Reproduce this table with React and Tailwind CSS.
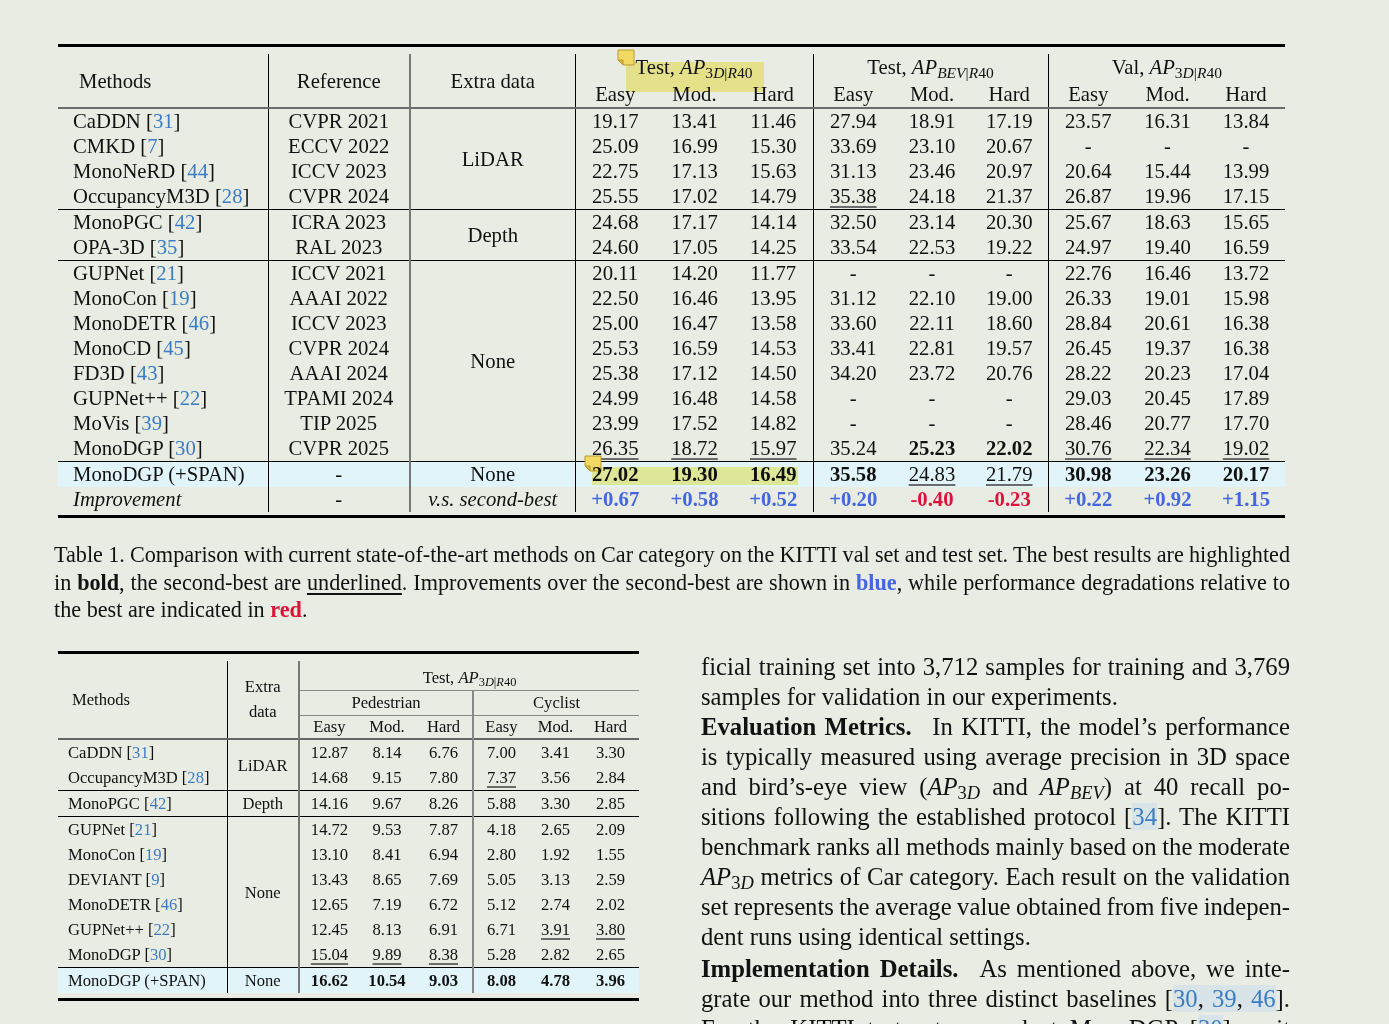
import React from 'react';

const Cite = ({ n }) => <span className="text-[#3b7cc4]">{n}</span>;

const AP3D = () => (
  <span className="whitespace-nowrap">
    <i>AP</i>
    <sub>
      3<i>D</i>|<i>R</i>40
    </sub>
  </span>
);

const APBEV = () => (
  <span className="whitespace-nowrap">
    <i>AP</i>
    <sub>
      <i>BEV</i>|<i>R</i>40
    </sub>
  </span>
);

const Sticky = ({ className }) => (
  <svg className={className} width="18" height="17" viewBox="0 0 18 17">
    <path d="M1 1 H17 V16 H6 L1 11 Z" fill="#f2d964" stroke="#b99a2c" strokeWidth="1" />
    <path d="M1 11 H6 V16 Z" fill="#d8b93e" stroke="#b99a2c" strokeWidth="1" />
  </svg>
);

const topGroups = [
  {
    g: 'LiDAR',
    rows: [
      ['CaDDN', '31', 'CVPR 2021', ['19.17', '13.41', '11.46', '27.94', '18.91', '17.19', '23.57', '16.31', '13.84']],
      ['CMKD', '7', 'ECCV 2022', ['25.09', '16.99', '15.30', '33.69', '23.10', '20.67', '-', '-', '-']],
      ['MonoNeRD', '44', 'ICCV 2023', ['22.75', '17.13', '15.63', '31.13', '23.46', '20.97', '20.64', '15.44', '13.99']],
      ['OccupancyM3D', '28', 'CVPR 2024', ['25.55', '17.02', '14.79', '_35.38', '24.18', '21.37', '26.87', '19.96', '17.15']],
    ],
  },
  {
    g: 'Depth',
    rows: [
      ['MonoPGC', '42', 'ICRA 2023', ['24.68', '17.17', '14.14', '32.50', '23.14', '20.30', '25.67', '18.63', '15.65']],
      ['OPA-3D', '35', 'RAL 2023', ['24.60', '17.05', '14.25', '33.54', '22.53', '19.22', '24.97', '19.40', '16.59']],
    ],
  },
  {
    g: 'None',
    rows: [
      ['GUPNet', '21', 'ICCV 2021', ['20.11', '14.20', '11.77', '-', '-', '-', '22.76', '16.46', '13.72']],
      ['MonoCon', '19', 'AAAI 2022', ['22.50', '16.46', '13.95', '31.12', '22.10', '19.00', '26.33', '19.01', '15.98']],
      ['MonoDETR', '46', 'ICCV 2023', ['25.00', '16.47', '13.58', '33.60', '22.11', '18.60', '28.84', '20.61', '16.38']],
      ['MonoCD', '45', 'CVPR 2024', ['25.53', '16.59', '14.53', '33.41', '22.81', '19.57', '26.45', '19.37', '16.38']],
      ['FD3D', '43', 'AAAI 2024', ['25.38', '17.12', '14.50', '34.20', '23.72', '20.76', '28.22', '20.23', '17.04']],
      ['GUPNet++', '22', 'TPAMI 2024', ['24.99', '16.48', '14.58', '-', '-', '-', '29.03', '20.45', '17.89']],
      ['MoVis', '39', 'TIP 2025', ['23.99', '17.52', '14.82', '-', '-', '-', '28.46', '20.77', '17.70']],
      ['MonoDGP', '30', 'CVPR 2025', ['_26.35', '_18.72', '_15.97', '35.24', '*25.23', '*22.02', '_30.76', '_22.34', '_19.02']],
    ],
  },
];

const spanTop = ['*27.02', '*19.30', '*16.49', '*35.58', '_24.83', '_21.79', '*30.98', '*23.26', '*20.17'];
const improve = ['+0.67', '+0.58', '+0.52', '+0.20', '-0.40', '-0.23', '+0.22', '+0.92', '+1.15'];

const botGroups = [
  {
    g: 'LiDAR',
    rows: [
      ['CaDDN', '31', ['12.87', '8.14', '6.76', '7.00', '3.41', '3.30']],
      ['OccupancyM3D', '28', ['14.68', '9.15', '7.80', '_7.37', '3.56', '2.84']],
    ],
  },
  {
    g: 'Depth',
    rows: [['MonoPGC', '42', ['14.16', '9.67', '8.26', '5.88', '3.30', '2.85']]],
  },
  {
    g: 'None',
    rows: [
      ['GUPNet', '21', ['14.72', '9.53', '7.87', '4.18', '2.65', '2.09']],
      ['MonoCon', '19', ['13.10', '8.41', '6.94', '2.80', '1.92', '1.55']],
      ['DEVIANT', '9', ['13.43', '8.65', '7.69', '5.05', '3.13', '2.59']],
      ['MonoDETR', '46', ['12.65', '7.19', '6.72', '5.12', '2.74', '2.02']],
      ['GUPNet++', '22', ['12.45', '8.13', '6.91', '6.71', '_3.91', '_3.80']],
      ['MonoDGP', '30', ['_15.04', '_9.89', '_8.38', '5.28', '2.82', '2.65']],
    ],
  },
];

const spanBot = ['*16.62', '*10.54', '*9.03', '*8.08', '*4.78', '*3.96'];

function Val({ v }) {
  let t = v;
  let cls = '';
  if (t.startsWith('*')) {
    cls = 'font-bold';
    t = t.slice(1);
  } else if (t.startsWith('_')) {
    cls = 'underline decoration-2 decoration-[#6b6b6b] underline-offset-[3px]';
    t = t.slice(1);
  }
  return <span className={cls}>{t}</span>;
}

function TopTable() {
  const edge = (i) => (i === 2 || i === 5 ? 'border-r border-r-black' : '');
  return (
    <div className="ml-[4px] w-[1227px]">
      <div className="h-[3px] bg-black" />
      <table className="mt-[7px] w-[1227px] table-fixed border-collapse text-[20.7px] leading-[25px]">
        <colgroup>
          <col className="w-[210px]" />
          <col className="w-[142px]" />
          <col className="w-[165px]" />
          <col className="w-[80px]" />
          <col className="w-[79px]" />
          <col className="w-[79px]" />
          <col className="w-[80px]" />
          <col className="w-[78px]" />
          <col className="w-[77px]" />
          <col className="w-[80px]" />
          <col className="w-[79px]" />
          <col className="w-[78px]" />
        </colgroup>
        <thead className="border-b-2 border-b-[#6b6b6b]">
          <tr className="h-[27px]">
            <th rowSpan={2} className="border-r border-r-black p-0 pl-[21px] pt-[2px] text-left font-normal">
              Methods
            </th>
            <th rowSpan={2} className="border-r-2 border-r-[#777] p-0 pt-[2px] font-normal">
              Reference
            </th>
            <th rowSpan={2} className="border-r border-r-black p-0 pt-[2px] font-normal">
              Extra data
            </th>
            <th colSpan={3} className="relative border-r border-r-black p-0 font-normal">
              <div className="absolute left-[50px] top-[8px] h-[30px] w-[138px] bg-[#fcf29b] mix-blend-multiply" />
              <Sticky className="absolute left-[41px] top-[-5px]" />
              <span className="relative">
                Test, <AP3D />
              </span>
            </th>
            <th colSpan={3} className="border-r border-r-black p-0 font-normal">
              Test, <APBEV />
            </th>
            <th colSpan={3} className="p-0 font-normal">
              Val, <AP3D />
            </th>
          </tr>
          <tr className="h-[27px]">
            {['Easy', 'Mod.', 'Hard', 'Easy', 'Mod.', 'Hard', 'Easy', 'Mod.', 'Hard'].map((h, i) => (
              <th key={i} className={`p-0 font-normal ${edge(i)}`}>
                {h}
              </th>
            ))}
          </tr>
        </thead>
        {topGroups.map((grp, gi) => (
          <tbody key={gi} className={gi > 0 ? 'border-t border-t-black' : ''}>
            {grp.rows.map((r, ri) => (
              <tr key={ri} className="h-[25px]">
                <td className="border-r border-r-black p-0 pl-[15px] text-left">
                  {r[0]} [<Cite n={r[1]} />]
                </td>
                <td className="border-r-2 border-r-[#777] p-0 text-center">{r[2]}</td>
                {ri === 0 && (
                  <td rowSpan={grp.rows.length} className="border-r border-r-black p-0 text-center align-middle">
                    {grp.g}
                  </td>
                )}
                {r[3].map((v, vi) => (
                  <td key={vi} className={`p-0 text-center ${edge(vi)}`}>
                    <Val v={v} />
                  </td>
                ))}
              </tr>
            ))}
          </tbody>
        ))}
        <tbody className="border-t border-t-black">
          <tr className="h-[25px] bg-[#e0f4fa]">
            <td className="border-r border-r-black p-0 pl-[15px] text-left">MonoDGP (+SPAN)</td>
            <td className="border-r-2 border-r-[#777] p-0 text-center">-</td>
            <td className="border-r border-r-black p-0 text-center">None</td>
            {spanTop.map((v, vi) => (
              <td key={vi} className={`p-0 text-center ${edge(vi)} ${vi === 0 ? 'relative' : ''}`}>
                {vi === 0 && (
                  <>
                    <div className="absolute left-[16px] top-[5px] h-[18px] w-[206px] bg-[#fcf29b] mix-blend-multiply" />
                    <Sticky className="absolute left-[8px] top-[-7px]" />
                  </>
                )}
                <span className="relative">
                  <Val v={v} />
                </span>
              </td>
            ))}
          </tr>
          <tr className="h-[25px]">
            <td className="border-r border-r-black p-0 pl-[15px] text-left italic">Improvement</td>
            <td className="border-r-2 border-r-[#777] p-0 text-center">-</td>
            <td className="border-r border-r-black p-0 text-center italic">v.s. second-best</td>
            {improve.map((v, vi) => (
              <td
                key={vi}
                className={`p-0 text-center font-bold ${edge(vi)} ${v.startsWith('-') ? 'text-[#e0123c]' : 'text-[#4466e0]'}`}
              >
                {v}
              </td>
            ))}
          </tr>
        </tbody>
      </table>
      <div className="mt-[3px] h-[3px] bg-black" />
    </div>
  );
}

function BottomTable() {
  const gray = 'border-r-2 border-r-[#777]';
  const sep = (i) => (i === 2 ? 'border-r-2 border-r-[#888]' : '');
  return (
    <div className="ml-[4px] w-[581px]">
      <div className="h-[3px] bg-black" />
      <table className="mt-[7px] w-[581px] table-fixed border-collapse text-[16.6px] leading-[25px]">
        <colgroup>
          <col className="w-[169px]" />
          <col className="w-[72px]" />
          <col className="w-[60px]" />
          <col className="w-[56px]" />
          <col className="w-[58px]" />
          <col className="w-[56px]" />
          <col className="w-[53px]" />
          <col className="w-[57px]" />
        </colgroup>
        <thead className="border-b-2 border-b-[#666]">
          <tr className="h-[29px]">
            <th rowSpan={3} className="border-r border-r-black p-0 pl-[14px] text-left font-normal">
              Methods
            </th>
            <th rowSpan={3} className={`${gray} p-0 font-normal`}>
              Extra
              <br />
              data
            </th>
            <th colSpan={6} className="p-0 pt-[4px] font-normal">
              Test, <AP3D />
            </th>
          </tr>
          <tr className="h-[25px] leading-[22px]">
            <th colSpan={3} className="border-r-2 border-t border-r-[#888] border-t-[#888] p-0 font-normal">
              Pedestrian
            </th>
            <th colSpan={3} className="border-t border-t-[#888] p-0 font-normal">
              Cyclist
            </th>
          </tr>
          <tr className="h-[24px] border-t border-t-[#888] leading-[22px]">
            {['Easy', 'Mod.', 'Hard', 'Easy', 'Mod.', 'Hard'].map((h, i) => (
              <th key={i} className={`p-0 font-normal ${sep(i)}`}>
                {h}
              </th>
            ))}
          </tr>
        </thead>
        {botGroups.map((grp, gi) => (
          <tbody key={gi} className={gi > 0 ? 'border-t border-t-black' : ''}>
            {grp.rows.map((r, ri) => (
              <tr key={ri} className="h-[25px]">
                <td className="border-r border-r-black p-0 pl-[10px] text-left">
                  {r[0]} [<Cite n={r[1]} />]
                </td>
                {ri === 0 && (
                  <td rowSpan={grp.rows.length} className={`${gray} p-0 text-center align-middle`}>
                    {grp.g}
                  </td>
                )}
                {r[2].map((v, vi) => (
                  <td key={vi} className={`p-0 text-center ${sep(vi)}`}>
                    <Val v={v} />
                  </td>
                ))}
              </tr>
            ))}
          </tbody>
        ))}
        <tbody className="border-t border-t-black">
          <tr className="h-[25px] bg-[#e0f4fa]">
            <td className="border-r border-r-black p-0 pl-[10px] text-left">MonoDGP (+SPAN)</td>
            <td className={`${gray} p-0 text-center`}>None</td>
            {spanBot.map((v, vi) => (
              <td key={vi} className={`p-0 text-center ${sep(vi)}`}>
                <Val v={v} />
              </td>
            ))}
          </tr>
        </tbody>
      </table>
      <div className="mt-[5px] h-[3px] bg-black" />
    </div>
  );
}

// justified line: spaces squeezed first so the line never wraps, then stretched to the full width
const J = 'whitespace-nowrap text-justify [text-align-last:justify] [word-spacing:-4px]';

const BodyCite = ({ children }) => <span className="bg-[#d9e4e9]">{children}</span>;

function Body() {
  return (
    <div className="ml-[62px] mt-[1px] w-[589px] text-[24.7px] leading-[30px]">
      <div className={J}>ficial training set into 3,712 samples for training and 3,769</div>
      <div>samples for validation in our experiments.</div>
      <div className={J}>
        <b>Evaluation Metrics.</b>&ensp; In KITTI, the model’s performance
      </div>
      <div className={J}>is typically measured using average precision in 3D space</div>
      <div className={J}>
        and bird’s-eye view (
        <i>AP</i>
        <sub>
          3<i>D</i>
        </sub>{' '}
        and <i>AP</i>
        <sub>
          <i>BEV</i>
        </sub>
        ) at 40 recall po-
      </div>
      <div className={J}>
        sitions following the established protocol [
        <BodyCite>
          <Cite n="34" />
        </BodyCite>
        ]. The KITTI
      </div>
      <div className={J}>benchmark ranks all methods mainly based on the moderate</div>
      <div className={J}>
        <i>AP</i>
        <sub>
          3<i>D</i>
        </sub>{' '}
        metrics of Car category. Each result on the validation
      </div>
      <div className={J}>set represents the average value obtained from five indepen-</div>
      <div>dent runs using identical settings.</div>
      <div className={`${J} mt-[2px]`}>
        <b>Implementation Details.</b>&ensp; As mentioned above, we inte-
      </div>
      <div className={J}>
        grate our method into three distinct baselines [
        <BodyCite>
          <Cite n="30" />, <Cite n="39" />, <Cite n="46" />
        </BodyCite>
        ].
      </div>
      <div className={J}>
        For the KITTI test set, we select MonoDGP [
        <BodyCite>
          <Cite n="30" />
        </BodyCite>
        ] as it
      </div>
    </div>
  );
}

export default function App() {
  return (
    <div className="h-screen overflow-hidden bg-[#e8ece3] font-['Liberation_Serif','Times_New_Roman',serif] text-[#111]">
      <div className="pl-[54px] pt-[44px]">
        <TopTable />

        {/* caption */}
        <div className="mt-[23px] w-[1236px] text-[22.2px] leading-[27.5px]">
          <div className={J}>
            Table 1. Comparison with current state-of-the-art methods on Car category on the KITTI val set and test set.
            The best results are highlighted
          </div>
          <div className={J}>
            in <b>bold</b>, the second-best are <span className="underline underline-offset-[3px]">underlined</span>.
            Improvements over the second-best are shown in <b className="text-[#4466e0]">blue</b>, while performance
            degradations relative to
          </div>
          <div>
            the best are indicated in <b className="text-[#e0123c]">red</b>.
          </div>
        </div>

        <div className="mt-[27px] flex items-start">
          <BottomTable />
          <Body />
        </div>
      </div>
    </div>
  );
}
